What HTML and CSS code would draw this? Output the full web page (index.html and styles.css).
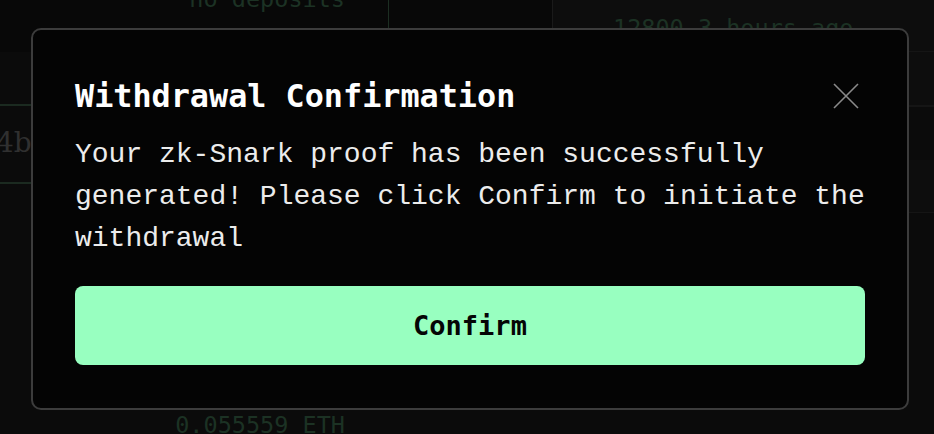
FILE: index.html
```html
<!DOCTYPE html>
<html lang="en">
<head>
<meta charset="utf-8">
<title>Withdrawal Confirmation</title>
<link rel="stylesheet" href="styles.css">
</head>
<body>
<div class="bg">
  <div class="row r1">
    <div class="c1"><span class="dim top">no deposits</span></div>
    <div class="c2"></div>
    <div class="c3"><span class="dim gap">12800 3 hours ago</span></div>
  </div>
  <div class="row r2">
    <div class="c1 lined"></div>
    <div class="c2"></div>
    <div class="c3"></div>
  </div>
  <div class="row r3">
    <div class="c1 lined"><span class="hash">4b5</span></div>
    <div class="c2"></div>
    <div class="c3"></div>
  </div>
  <div class="row r4">
    <div class="c1"></div>
    <div class="c2"></div>
    <div class="c3"></div>
  </div>
  <div class="row r5">
    <div class="c1"></div>
    <div class="c2"></div>
    <div class="c3 plain"></div>
  </div>
  <div class="row r6">
    <div class="c1"><span class="dim bottom">0.055559 ETH</span></div>
    <div class="c2"></div>
    <div class="c3 plain"></div>
  </div>
</div>

<div class="modal" role="dialog" aria-labelledby="mtitle">
  <div class="head">
    <h2 id="mtitle" class="title">Withdrawal Confirmation</h2>
    <button class="close" aria-label="Close">
      <svg width="26" height="26" viewBox="0 0 26 26"><path d="M1 1L25 25M25 1L1 25" stroke="#8a8a8a" stroke-width="1.6" fill="none"/></svg>
    </button>
  </div>
  <p class="text">Your zk-Snark proof has been successfully generated! Please click Confirm to initiate the withdrawal</p>
  <button class="confirm">Confirm</button>
</div>
</body>
</html>
```

FILE: styles.css
```css
html, body {
  margin: 0;
  padding: 0;
}
body {
  width: 934px;
  height: 434px;
  overflow: hidden;
  background: #0b0b0b;
  font-family: "DejaVu Sans Mono", "Liberation Mono", monospace;
  position: relative;
}
.bg {
  display: flex;
  flex-direction: column;
}
.row {
  display: flex;
}
.r1 { height: 52px; }
.r2 { height: 54px; }
.r3 { height: 54px; }
.r4 { height: 53px; }
.r5 { height: 44px; }
.r6 { height: 177px; align-items: flex-end; }
.c1 {
  width: 388px;
  display: flex;
  justify-content: flex-end;
  box-sizing: border-box;
  padding-right: 43px;
}
.c2 {
  width: 163px;
  border-left: 1px solid #1c2e22;
}
.c3 {
  flex: 1;
  border-left: 1px solid #1a1a1a;
  border-bottom: 1px solid #151515;
  background: #0d0d0d;
}
.c3.plain { background: #0b0b0b; border-bottom: none; }
.r1 .c1, .r1 .c2 { background: #080808; }
.r6 .c1 { align-items: flex-end; height: 100%; }
.lined { border-bottom: 2px solid #1b2a20; }
.r3 .c1 { justify-content: flex-start; padding: 0; height: 78px; }
.r3 { align-items: flex-start; }
.dim {
  color: #1c3224;
  font-size: 23.5px;
  line-height: 24px;
  white-space: nowrap;
}
.top { margin-top: -13px; }
.gap { display: block; margin: 16px 0 0 60px; }
.bottom { margin-bottom: -3px; }
.hash {
  font-family: "DejaVu Serif", serif;
  color: #303030;
  font-size: 28px;
  margin: 20px 0 0 -4px;
}
.modal {
  position: absolute;
  left: 31px;
  top: 28px;
  width: 878px;
  height: 382px;
  box-sizing: border-box;
  border: 2px solid #3c3c3c;
  border-radius: 10px;
  background: #040404;
  padding: 46px 42px 42px;
  display: flex;
  flex-direction: column;
}
.head {
  display: flex;
  justify-content: space-between;
  align-items: center;
}
.title {
  margin: 0;
  color: #ffffff;
  font-family: "DejaVu Sans Mono", monospace;
  font-weight: bold;
  font-size: 31.8px;
  line-height: 40px;
}
.close {
  background: none;
  border: none;
  padding: 0;
  margin-right: 6px;
  width: 26px;
  height: 26px;
  display: flex;
  cursor: pointer;
}
.text {
  margin: 18px 0 0;
  color: #ececec;
  font-family: "Liberation Mono", monospace;
  font-size: 28px;
  line-height: 42px;
}
.confirm {
  margin-top: 26px;
  height: 79px;
  border: none;
  border-radius: 8px;
  background: #98ffc0;
  color: #050505;
  font-family: "DejaVu Sans Mono", monospace;
  font-weight: bold;
  font-size: 27px;
  cursor: pointer;
}
```
